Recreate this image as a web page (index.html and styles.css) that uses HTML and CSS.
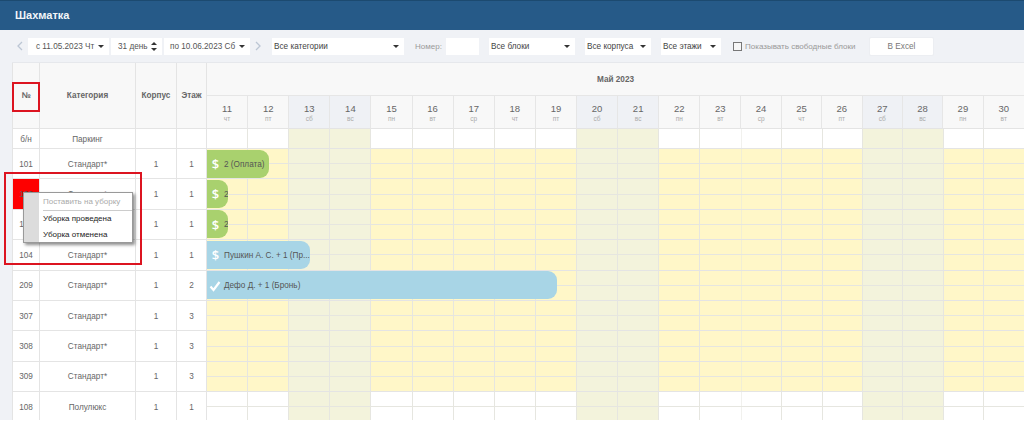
FILE: index.html
```html
<!DOCTYPE html>
<html lang="ru">
<head>
<meta charset="utf-8">
<title>Шахматка</title>
<link rel="stylesheet" href="styles.css">
</head>
<body>
<header class="topbar">Шахматка</header>
<div class="toolbar">
  <svg class="chev ml-15" viewBox="0 0 11 12"><polyline points="7,2 3,6 7,10"/></svg>
  <div class="sel w-81 ml-2 pl-8">с 11.05.2023 Чт</div>
  <div class="sel spin w-51 ml-2 pl-7">31 день</div>
  <div class="sel w-86 ml-2 pl-6">по 10.06.2023 Сб</div>
  <svg class="chev ml-2" viewBox="0 0 11 12"><polyline points="4,2 8,6 4,10"/></svg>
  <div class="sel w-132 ml-9 pl-2 dark">Все категории</div>
  <span class="lbl w-26 ml-11">Номер:</span>
  <div class="num ml-5"></div>
  <div class="sel w-86 ml-10 pl-2 dark">Все блоки</div>
  <div class="sel w-66 ml-10 pl-2 dark">Все корпуса</div>
  <div class="sel w-60 ml-10 pl-2 dark">Все этажи</div>
  <span class="check ml-12"></span>
  <span class="lbl w-110 ml-3">Показывать свободные блоки</span>
  <button class="excel" type="button">В Excel</button>
</div>

<main class="board">
  <div class="head">
    <div class="hcell">№</div>
    <div class="hcell">Категория</div>
    <div class="hcell">Корпус</div>
    <div class="hcell">Этаж</div>
    <div class="hdates">
      <div class="month">Май 2023</div>
      <div class="days">
        <div class="day"><b>11</b><i>чт</i></div>
        <div class="day"><b>12</b><i>пт</i></div>
        <div class="day off"><b>13</b><i>сб</i></div>
        <div class="day off"><b>14</b><i>вс</i></div>
        <div class="day"><b>15</b><i>пн</i></div>
        <div class="day"><b>16</b><i>вт</i></div>
        <div class="day"><b>17</b><i>ср</i></div>
        <div class="day"><b>18</b><i>чт</i></div>
        <div class="day"><b>19</b><i>пт</i></div>
        <div class="day off"><b>20</b><i>сб</i></div>
        <div class="day off"><b>21</b><i>вс</i></div>
        <div class="day"><b>22</b><i>пн</i></div>
        <div class="day"><b>23</b><i>вт</i></div>
        <div class="day"><b>24</b><i>ср</i></div>
        <div class="day"><b>25</b><i>чт</i></div>
        <div class="day"><b>26</b><i>пт</i></div>
        <div class="day off"><b>27</b><i>сб</i></div>
        <div class="day off"><b>28</b><i>вс</i></div>
        <div class="day"><b>29</b><i>пн</i></div>
        <div class="day"><b>30</b><i>вт</i></div>
      </div>
    </div>
  </div>

  <div class="row short"><div class="cell">б/н</div><div class="cell">Паркинг</div><div class="cell"></div><div class="cell"></div><div class="track plain"></div></div>

  <div class="row"><div class="cell">101</div><div class="cell">Стандарт*</div><div class="cell">1</div><div class="cell">1</div>
    <div class="track free"><div class="bar green" style="width:62px"><span class="ico">$</span><span class="txt">2 (Оплата)</span></div></div></div>

  <div class="row"><div class="cell red">102</div><div class="cell">Стандарт*</div><div class="cell">1</div><div class="cell">1</div>
    <div class="track free"><div class="bar green" style="width:21px"><span class="ico">$</span><span class="txt">2</span></div></div></div>

  <div class="row"><div class="cell">103</div><div class="cell">Стандарт*</div><div class="cell">1</div><div class="cell">1</div>
    <div class="track free"><div class="bar green" style="width:21px"><span class="ico">$</span><span class="txt">2</span></div></div></div>

  <div class="row"><div class="cell">104</div><div class="cell">Стандарт*</div><div class="cell">1</div><div class="cell">1</div>
    <div class="track free"><div class="bar blue" style="width:103px"><span class="ico">$</span><span class="txt">Пушкин А. С. + 1 (Пр...</span></div></div></div>

  <div class="row"><div class="cell">209</div><div class="cell">Стандарт*</div><div class="cell">1</div><div class="cell">2</div>
    <div class="track free"><div class="bar blue" style="width:350px"><svg class="tick" viewBox="0 0 12 12"><polyline points="1.5,6.5 4.5,10 10.5,2"/></svg><span class="txt">Дефо Д. + 1 (Бронь)</span></div></div></div>

  <div class="row"><div class="cell">307</div><div class="cell">Стандарт*</div><div class="cell">1</div><div class="cell">3</div><div class="track free"></div></div>
  <div class="row"><div class="cell">308</div><div class="cell">Стандарт*</div><div class="cell">1</div><div class="cell">3</div><div class="track free"></div></div>
  <div class="row"><div class="cell">309</div><div class="cell">Стандарт*</div><div class="cell">1</div><div class="cell">3</div><div class="track free"></div></div>
  <div class="row"><div class="cell">108</div><div class="cell">Полулюкс</div><div class="cell">1</div><div class="cell">1</div><div class="track plain mid"></div></div>

  <div class="mark mark-no"></div>
  <div class="mark mark-menu"></div>
  <div class="menu">
    <div class="item muted">Поставить на уборку</div>
    <div class="sep"></div>
    <div class="item">Уборка проведена</div>
    <div class="item">Уборка отменена</div>
  </div>
</main>
</body>
</html>
```
FILE: styles.css
```css
* { box-sizing: border-box; }
html, body { height: 100%; }
body {
  margin: 0;
  overflow: hidden;
  background: #fff;
  font-family: "Liberation Sans", Arial, sans-serif;
  font-size: 8.2px;
  color: #555;
}

.topbar {
  height: 30px;
  padding: 0 0 1px 15px;
  display: flex;
  align-items: center;
  background: #265a88;
  border-top: 1px solid #1c4a70;
  color: #f2f5f8;
  font-size: 11px;
  font-weight: bold;
}

.toolbar {
  height: 32px;
  display: flex;
  align-items: center;
  background: #f0f2f6;
}
.chev { width: 11px; height: 12px; flex: none; }
.chev polyline { fill: none; stroke: #bcc6d4; stroke-width: 1.3; }

.sel {
  position: relative;
  height: 17px;
  line-height: 17px;
  background: #fff;
  color: #555;
  white-space: nowrap;
  flex: none;
}
.sel.dark { color: #444; }
.sel::after {
  content: "";
  position: absolute;
  right: 5px;
  top: 7px;
  border-left: 3px solid transparent;
  border-right: 3px solid transparent;
  border-top: 3px solid #333;
}
.sel.spin::after { top: 4px; border-top: 0; border-bottom: 3px solid #333; }
.sel.spin::before {
  content: "";
  position: absolute;
  right: 5px;
  top: 10px;
  border-left: 3px solid transparent;
  border-right: 3px solid transparent;
  border-top: 3px solid #333;
}

.w-26 { width: 26px; }
.w-51 { width: 51px; }
.w-60 { width: 60px; }
.w-66 { width: 66px; }
.w-81 { width: 81px; }
.w-86 { width: 86px; }
.w-110 { width: 110px; }
.w-132 { width: 132px; }
.pl-2 { padding-left: 2px; }
.pl-6 { padding-left: 6px; }
.pl-7 { padding-left: 7px; }
.pl-8 { padding-left: 8px; }
.ml-2 { margin-left: 2px; }
.ml-3 { margin-left: 3px; }
.ml-5 { margin-left: 5px; }
.ml-9 { margin-left: 9px; }
.ml-10 { margin-left: 10px; }
.ml-11 { margin-left: 11px; }
.ml-12 { margin-left: 12px; }
.ml-15 { margin-left: 15px; }

.lbl { color: #999; font-size: 8px; white-space: nowrap; flex: none; }
.num { width: 33px; height: 17px; background: #fff; flex: none; }
.check {
  width: 9px;
  height: 9px;
  flex: none;
  background: #f6f6f6;
  border: 1px solid #777;
}
.excel {
  width: 65px;
  height: 19px;
  margin-left: 14px;
  padding: 0;
  flex: none;
  background: #fff;
  border: 1px solid #eceef2;
  border-radius: 2px;
  color: #777;
  font: 8.2px "Liberation Sans", Arial, sans-serif;
}

.board {
  position: relative;
  padding-left: 12px;
  height: 358px;
  overflow: hidden;
  background: #f0f2f6;
}
.head, .row {
  display: grid;
  grid-template-columns: 28px 96px 41px 30px 1fr;
}
.head { height: 67px; background: #f8f8f8; border-top: 1px solid #e6e8ec; }
.row { height: 30.4px; background: #fff; }
.row.short { height: 20px; }

.hcell {
  display: flex;
  align-items: center;
  justify-content: center;
  border-right: 1px solid #e4e4e4;
  border-bottom: 1px solid #e4e4e4;
  font-weight: bold;
  color: #666;
}
.hcell:first-child, .cell:first-child {
  border-left: 1px solid #e4e4e4;
}
.hdates { display: flex; flex-direction: column; min-width: 0; }
.month {
  height: 33px;
  line-height: 33px;
  text-align: center;
  font-weight: bold;
  color: #666;
  border-bottom: 1px solid #e6e6e6;
}
.days { flex: 1; display: flex; }
.day {
  flex: none;
  width: 41.12px;
  display: flex;
  flex-direction: column;
  align-items: center;
  padding-top: 7px;
  border-right: 1px solid #e6e6e6;
  border-bottom: 1px solid #e4e4e4;
}
.day:nth-child(n+14) { width: 40.36px; }
.day:last-child { border-right: 0; }
.day.off { background: #eff1f5; }
.day b { font-weight: normal; font-size: 9.5px; line-height: 12px; color: #666; }
.day i { font-style: normal; font-size: 6.5px; line-height: 10px; margin-top: -1px; color: #aaa; }

.cell {
  display: flex;
  align-items: center;
  justify-content: center;
  padding-top: 1px;
  border-right: 1px solid #e4e4e4;
  border-bottom: 1px solid #e4e4e4;
  color: #666;
  min-width: 0;
}
.cell.red { background: #fe0000; color: #555; }

.track {
  --off: #f3f3dc;
  --line: #e6e6e0;
  --lines:
    repeating-linear-gradient(90deg, transparent 0 40.12px, var(--line) 40.12px 41.12px),
    repeating-linear-gradient(90deg, transparent 0 39.36px, var(--line) 39.36px 40.36px);
  --weekends:
    linear-gradient(var(--off), var(--off)),
    linear-gradient(var(--off), var(--off)),
    linear-gradient(var(--off), var(--off));
  position: relative;
  border-bottom: 1px solid #e4e4e4;
  background-image: var(--lines), var(--weekends);
  background-size: 534.56px 100%, 282.44px 100%, 82.24px 100%, 82.24px 100%, 80.72px 100%;
  background-position: 0 0, 534.56px 0, 82.24px 0, 370.08px 0, 655.64px 0;
  background-repeat: no-repeat;
}
.track.plain { background-color: #fff; }
.track.free, .track.mid {
  background-image: linear-gradient(var(--line), var(--line)), var(--lines), var(--weekends);
  background-size: 100% 1px, 534.56px 100%, 282.44px 100%, 82.24px 100%, 82.24px 100%, 80.72px 100%;
  background-position: 0 50%, 0 0, 534.56px 0, 82.24px 0, 370.08px 0, 655.64px 0;
}
.track.free { background-color: #fff7c8; }

.bar {
  position: absolute;
  left: 0;
  top: 0.5px;
  height: 28px;
  display: flex;
  align-items: center;
  padding-top: 1px;
  border-radius: 0 9px 9px 0;
  overflow: hidden;
  white-space: nowrap;
  color: #555;
}
.bar.green { background: #a9d16e; }
.bar.blue { background: #a8d5e6; }
.ico {
  width: 17px;
  flex: none;
  text-align: center;
  color: #fff;
  font: 600 13px "Open Sans", sans-serif;
}
.tick { width: 12px; height: 12px; margin: 0 3px 0 2px; flex: none; }
.tick polyline { fill: none; stroke: #fff; stroke-width: 2.2; }

.mark { position: absolute; border: 2px solid #dc1420; }
.mark-no { left: 12px; top: 20px; width: 28px; height: 30px; }
.mark-menu { left: 4px; top: 110px; width: 138px; height: 93px; }

.menu {
  position: absolute;
  left: 23px;
  top: 130px;
  width: 110px;
  height: 51px;
  padding: 1px 0 0 19px;
  background: linear-gradient(90deg, #dcdcdc 15px, #fff 15px);
  border: 1px solid #999;
  box-shadow: 2px 2px 3px rgba(0, 0, 0, .45);
  font-size: 8px;
}
.item { height: 16px; line-height: 16px; color: #222; white-space: nowrap; }
.item.muted { color: #aaa; }
.sep { height: 1px; background: #ccc; }
```
